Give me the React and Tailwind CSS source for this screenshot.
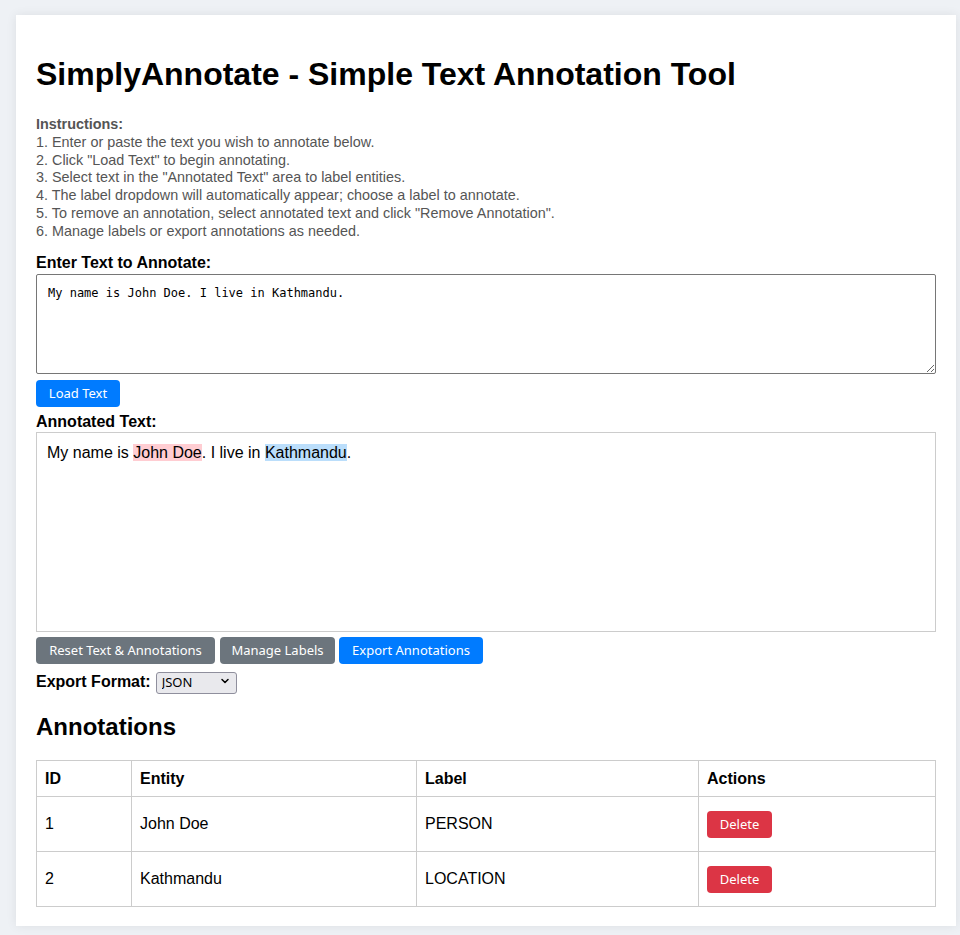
import { useState } from "react";
import { ChevronDown } from "lucide-react";

const btnFont = { fontFamily: '"Noto Sans", "Open Sans", sans-serif' };

export default function App() {
  const [text, setText] = useState("My name is John Doe. I live in Kathmandu.");
  const [format, setFormat] = useState("JSON");
  const annotations = [
    { id: 1, entity: "John Doe", label: "PERSON" },
    { id: 2, entity: "Kathmandu", label: "LOCATION" },
  ];

  return (
    <div
      className="min-h-[935px] bg-[#eef1f5] pt-[15px] pl-4 pr-1 pb-[9px]"
      style={{ fontFamily: '"Liberation Sans", Arial, sans-serif' }}
    >
      <div className="w-[940px] bg-white px-5 pt-5 pb-[19px] shadow-[0_0_10px_rgba(0,0,0,0.08)] text-black">
        {/* header */}
        <h1 className="text-[32px] font-bold leading-[37px] mt-[21px] mb-[23px]">
          SimplyAnnotate - Simple Text Annotation Tool
        </h1>

        <div className="text-[14.4px] leading-[17.8px] text-[#555]">
          <div className="font-bold">Instructions:</div>
          <div>1. Enter or paste the text you wish to annotate below.</div>
          <div>2. Click "Load Text" to begin annotating.</div>
          <div>3. Select text in the "Annotated Text" area to label entities.</div>
          <div>4. The label dropdown will automatically appear; choose a label to annotate.</div>
          <div>5. To remove an annotation, select annotated text and click "Remove Annotation".</div>
          <div>6. Manage labels or export annotations as needed.</div>
        </div>

        {/* input */}
        <label className="block mt-[13px] text-base font-bold leading-[18.4px]">
          Enter Text to Annotate:
        </label>
        <textarea
          value={text}
          onChange={(e) => setText(e.target.value)}
          className="block mt-[2px] w-full h-[100px] border border-[#767676] rounded-[2px] px-[11px] py-[11px] text-[12px] leading-[15px] outline-none resize-y"
          style={{ fontFamily: '"DejaVu Sans Mono", "Liberation Mono", monospace' }}
        />
        <button
          className="mt-[6px] h-[27px] w-[84px] rounded bg-[#007bff] text-white text-[13px]"
          style={btnFont}
        >
          Load Text
        </button>

        <label className="block mt-[6px] text-base font-bold leading-[18.4px]">
          Annotated Text:
        </label>
        <div className="mt-[1px] h-[200px] border border-[#ccc] px-[10px] py-[10px] text-base leading-[19px]">
          My name is <span className="bg-[#ffcdd2]">John Doe</span>. I live in{" "}
          <span className="bg-[#bbdefb]">Kathmandu</span>.
        </div>

        {/* actions */}
        <div className="flex mt-[5px]" style={btnFont}>
          <button className="h-[27px] w-[179px] rounded bg-[#6c757d] text-white text-[13px]">
            Reset Text &amp; Annotations
          </button>
          <button className="ml-[5px] h-[27px] w-[115px] rounded bg-[#6c757d] text-white text-[13px]">
            Manage Labels
          </button>
          <button className="ml-[4px] h-[27px] w-[144px] rounded bg-[#007bff] text-white text-[13px]">
            Export Annotations
          </button>
        </div>

        <div className="flex items-center gap-[5px] mt-[6px]">
          <span className="text-base font-bold">Export Format:</span>
          <div className="relative">
            <select
              value={format}
              onChange={(e) => setFormat(e.target.value)}
              className="appearance-none w-[81px] h-[22px] pl-[5px] border border-[#8f8f9d] rounded-[3px] bg-[#e9e9ed] text-[13px] text-black outline-none"
              style={btnFont}
            >
              <option>JSON</option>
              <option>CSV</option>
            </select>
            <ChevronDown
              size={12}
              strokeWidth={3}
              className="pointer-events-none absolute right-[6px] top-[5px] text-black"
            />
          </div>
        </div>

        {/* annotations table */}
        <h2 className="text-2xl font-bold leading-[28px] mt-[19px] mb-[19px]">Annotations</h2>
        <table className="w-full border-collapse text-base">
          <thead>
            <tr className="h-[36px]">
              <th className="w-[95px] border border-[#ccc] px-2 text-left font-bold">ID</th>
              <th className="w-[285px] border border-[#ccc] px-2 text-left font-bold">Entity</th>
              <th className="w-[282px] border border-[#ccc] px-2 text-left font-bold">Label</th>
              <th className="border border-[#ccc] px-2 text-left font-bold">Actions</th>
            </tr>
          </thead>
          <tbody>
            {annotations.map((a) => (
              <tr key={a.id} className="h-[55px]">
                <td className="border border-[#ccc] px-2">{a.id}</td>
                <td className="border border-[#ccc] px-2">{a.entity}</td>
                <td className="border border-[#ccc] px-2">{a.label}</td>
                <td className="border border-[#ccc] px-2">
                  <button
                    className="h-[27px] w-[65px] rounded bg-[#dc3545] text-white text-[13px]"
                    style={btnFont}
                  >
                    Delete
                  </button>
                </td>
              </tr>
            ))}
          </tbody>
        </table>
      </div>
    </div>
  );
}
